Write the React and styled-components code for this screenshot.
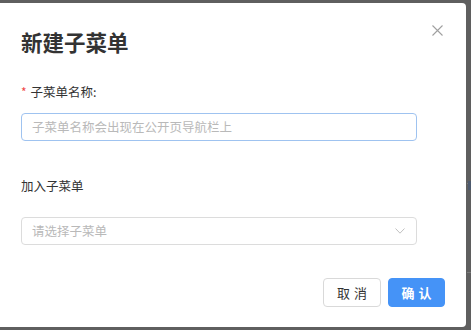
import React from "react";
import styled, { createGlobalStyle } from "styled-components";

const Global = createGlobalStyle`
  html, body { margin: 0; padding: 0; }
  body {
    background: #5f5f5f;
    font-family: "Noto Sans CJK SC", "Noto Sans", sans-serif;
    width: 471px;
    height: 330px;
    overflow: hidden;
  }
`;

const Page = styled.div`
  position: relative;
  width: 471px;
  height: 330px;
  padding-top: 3px;
  box-sizing: border-box;
`;

const BgLine = styled.div`
  position: absolute;
  right: 0;
  top: ${(p) => p.top}px;
  width: 4px;
  height: 1px;
  background: #7a7a7a;
`;

const BgMark = styled.div`
  position: absolute;
  right: 0;
  top: 181px;
  width: 3px;
  height: 9px;
  background: #4d5a6e;
`;

const Dialog = styled.div`
  position: relative;
  margin-left: -4px;
  width: 470px;
  height: 324px;
  box-sizing: border-box;
  background: #fff;
  border-radius: 4px;
  padding: 24px 21px 20px 25px;
  display: flex;
  flex-direction: column;
`;

const Title = styled.h2`
  margin: 0;
  font-size: 21.5px;
  line-height: 30px;
  font-weight: 700;
  color: #333;
`;

const Close = styled.button`
  position: absolute;
  top: 19px;
  right: 20px;
  width: 17px;
  height: 17px;
  padding: 0;
  border: none;
  background: none;
  display: flex;
  align-items: center;
  justify-content: center;
`;

const Label = styled.div`
  margin-top: ${(p) => p.mt}px;
  font-size: 12.5px;
  line-height: 20px;
  color: #333;
  display: flex;
  align-items: center;
`;

const Star = styled.span`
  color: #f04848;
  margin-right: 4px;
  font-size: 12px;
`;

const Field = styled.div`
  margin-top: ${(p) => p.mt}px;
  width: 396px;
  height: 28px;
  box-sizing: border-box;
  border: 1px solid ${(p) => (p.focused ? "#9fc3f0" : "#dcdcdc")};
  border-radius: 4px;
  display: flex;
  align-items: center;
  justify-content: space-between;
  padding: 0 11px 0 10px;
`;

const Placeholder = styled.span`
  font-size: 12.5px;
  color: #b9b9b9;
  line-height: 20px;
`;

const Footer = styled.div`
  margin-top: 33px;
  display: flex;
  justify-content: flex-end;
  gap: 7px;
`;

const Button = styled.button`
  width: ${(p) => p.w}px;
  height: 29px;
  box-sizing: border-box;
  border-radius: 4px;
  border: 1px solid ${(p) => (p.primary ? "#4593f7" : "#d9d9d9")};
  background: ${(p) => (p.primary ? "#4593f7" : "#fff")};
  color: ${(p) => (p.primary ? "#fff" : "#333")};
  font-family: "Noto Sans CJK SC", sans-serif;
  font-size: 13px;
  font-weight: ${(p) => (p.primary ? 700 : 400)};
  letter-spacing: 4px;
  padding: 0 0 0 4px;
  display: flex;
  align-items: center;
  justify-content: center;
`;

export default function App() {
  return (
    <>
      <Global />
      <Page>
        <BgLine top={183} />
        <BgMark />
        <BgLine top={272} />
        <Dialog>
          <Title>新建子菜单</Title>
          <Close aria-label="close">
            <svg width="11" height="11" viewBox="0 0 11 11">
              <path d="M0.5 0.5 L10.5 10.5 M10.5 0.5 L0.5 10.5" stroke="#a0a0a0" strokeWidth="1.1" fill="none" />
            </svg>
          </Close>
          <Label mt={25}>
            <Star>*</Star>子菜单名称:
          </Label>
          <Field mt={11} focused>
            <Placeholder>子菜单名称会出现在公开页导航栏上</Placeholder>
          </Field>
          <Label mt={35}>加入子菜单</Label>
          <Field mt={21}>
            <Placeholder>请选择子菜单</Placeholder>
            <svg width="10" height="6" viewBox="0 0 10 6">
              <path d="M0.5 0.5 L5 5.2 L9.5 0.5" stroke="#c0c0c0" strokeWidth="1" fill="none" />
            </svg>
          </Field>
          <Footer>
            <Button w={58}>取消</Button>
            <Button w={57} primary>确认</Button>
          </Footer>
        </Dialog>
      </Page>
    </>
  );
}
